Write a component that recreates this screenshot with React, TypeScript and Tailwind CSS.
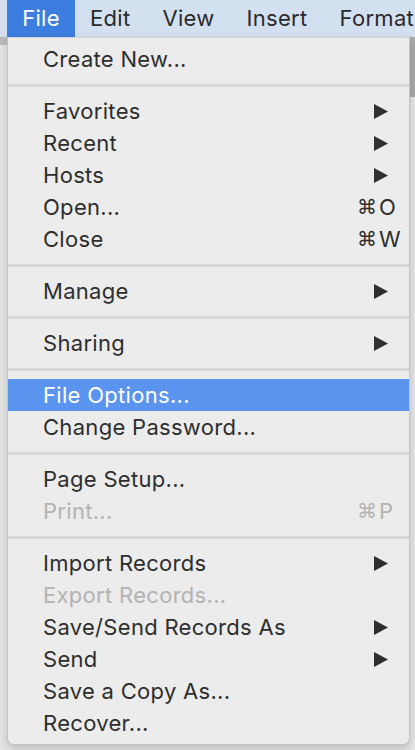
import React from "react";

type Item =
  | { type: "sep" }
  | { type: "item"; label: string; arrow?: boolean; shortcut?: string; disabled?: boolean; active?: boolean };

const items: Item[] = [
  { type: "item", label: "Create New..." },
  { type: "sep" },
  { type: "item", label: "Favorites", arrow: true },
  { type: "item", label: "Recent", arrow: true },
  { type: "item", label: "Hosts", arrow: true },
  { type: "item", label: "Open...", shortcut: "O" },
  { type: "item", label: "Close", shortcut: "W" },
  { type: "sep" },
  { type: "item", label: "Manage", arrow: true },
  { type: "sep" },
  { type: "item", label: "Sharing", arrow: true },
  { type: "sep" },
  { type: "item", label: "File Options...", active: true },
  { type: "item", label: "Change Password..." },
  { type: "sep" },
  { type: "item", label: "Page Setup..." },
  { type: "item", label: "Print...", shortcut: "P", disabled: true },
  { type: "sep" },
  { type: "item", label: "Import Records", arrow: true },
  { type: "item", label: "Export Records...", disabled: true },
  { type: "item", label: "Save/Send Records As", arrow: true },
  { type: "item", label: "Send", arrow: true },
  { type: "item", label: "Save a Copy As..." },
  { type: "item", label: "Recover..." },
];

function Arrow() {
  return (
    <svg width="14" height="15" viewBox="0 0 14 15" className="mr-[21px] shrink-0">
      <polygon points="0,0 14,7.5 0,15" fill="#2f2f2f" />
    </svg>
  );
}

export default function App() {
  const font = { fontFamily: "Inter, 'Noto Sans', 'Liberation Sans', sans-serif" };
  return (
    <div className="relative w-[415px] h-[750px] overflow-hidden bg-[#e6e6e6]" style={font}>
      {/* menu bar */}
      <div className="flex h-[37px] items-stretch bg-[#d3e0ef] text-[22px] tracking-[0.3px] text-[#2a2a2a]">
        <div className="ml-[7px] flex w-[68px] items-center justify-center bg-[#3c7ee0] text-white">File</div>
        <div className="flex items-center pl-[15px]">Edit</div>
        <div className="flex items-center pl-[32px]">View</div>
        <div className="flex items-center pl-[32px]">Insert</div>
        <div className="flex items-center pl-[32px] whitespace-nowrap">Format</div>
      </div>
      {/* background strip under menu bar */}
      <div className="h-[8px] bg-[#b9b9b9]" />
      <div className="absolute right-0 top-[37px] h-[60px] w-[5px] bg-[#a9a9a9]" />

      {/* menu */}
      <div className="absolute left-[7px] top-[37px] w-[403px] rounded-b-[7px] border border-t-0 border-[#c4c4c4] bg-[#ececec] pt-[6px] pb-[5px] shadow-[0_4px_10px_rgba(0,0,0,0.18)]">
        <div className="absolute inset-x-0 top-0 h-px bg-[#d6d6d6]" />
        {items.map((it, i) =>
          it.type === "sep" ? (
            <div key={i} className="flex h-[20px] items-center">
              <div className="h-[3px] w-full bg-[#d8d8d8]" />
            </div>
          ) : (
            <div
              key={i}
              className={
                "flex h-[32px] items-center justify-between pl-[35px] text-[22px] tracking-[0.3px] leading-none " +
                (it.active ? "bg-[#5b94ef] text-white " : "") +
                (it.disabled ? "text-[#b3b3b3] " : it.active ? "" : "text-[#2e2e2e] ")
              }
            >
              <span className="whitespace-nowrap">{it.label}</span>
              {it.arrow ? <Arrow /> : null}
              {it.shortcut ? (
                <span className="flex w-[52px] shrink-0 items-center whitespace-nowrap">
                  <span style={{ fontFamily: "'DejaVu Sans', sans-serif" }} className="text-[20px] tracking-normal">⌘</span>
                  <span className="ml-[2px]">{it.shortcut}</span>
                </span>
              ) : null}
            </div>
          )
        )}
      </div>
    </div>
  );
}
